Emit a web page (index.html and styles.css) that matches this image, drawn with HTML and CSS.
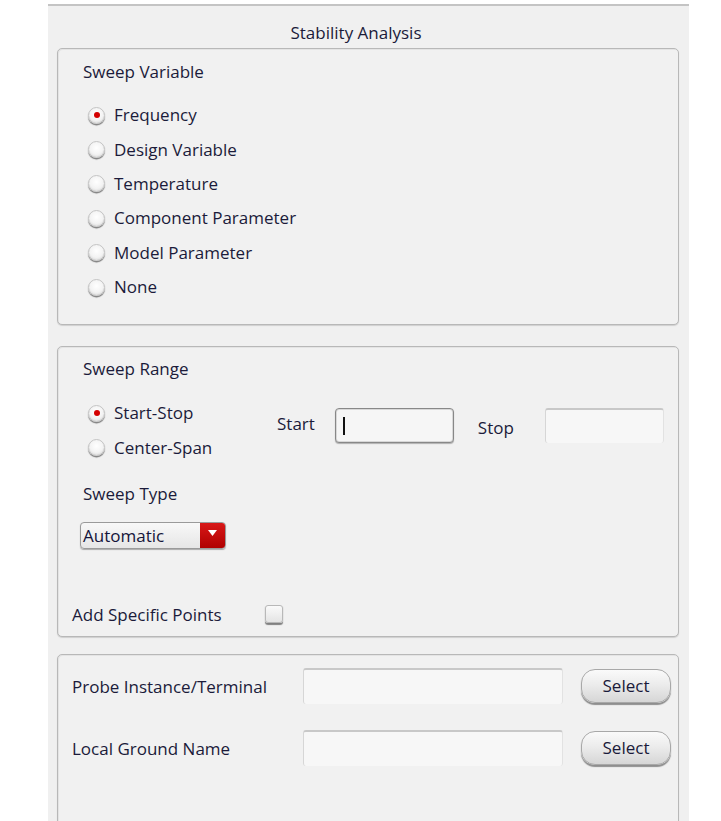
FILE: index.html
```html
<!DOCTYPE html>
<html>
<head>
<meta charset="utf-8">
<link rel="stylesheet" href="styles.css">
</head>
<body>
<div class="panel">
  <div class="title">Stability Analysis</div>

  <div class="group g1">
    <div class="heading">Sweep Variable</div>
    <div class="radios">
      <div class="radio-row"><span class="radio on"></span><span>Frequency</span></div>
      <div class="radio-row"><span class="radio"></span><span>Design Variable</span></div>
      <div class="radio-row"><span class="radio"></span><span>Temperature</span></div>
      <div class="radio-row"><span class="radio"></span><span>Component Parameter</span></div>
      <div class="radio-row"><span class="radio"></span><span>Model Parameter</span></div>
      <div class="radio-row"><span class="radio"></span><span>None</span></div>
    </div>
  </div>

  <div class="group g2">
    <div class="heading">Sweep Range</div>
    <div class="range-row">
      <div class="radios small">
        <div class="radio-row"><span class="radio on"></span><span>Start-Stop</span></div>
        <div class="radio-row"><span class="radio"></span><span>Center-Span</span></div>
      </div>
      <div class="field start">
        <span class="lbl">Start</span>
        <span class="input focus"><span class="caret"></span></span>
      </div>
      <div class="field stop">
        <span class="lbl">Stop</span>
        <span class="input flat"></span>
      </div>
    </div>
    <div class="heading type">Sweep Type</div>
    <div class="dropdown">
      <span class="dd-text">Automatic</span>
      <span class="dd-btn"><svg width="9" height="6" viewBox="0 0 9 6"><path d="M0 0 H9 L4.5 6 Z" fill="#fff"/></svg></span>
    </div>
    <div class="points">
      <span class="pts-lbl">Add Specific Points</span>
      <span class="check"></span>
    </div>
  </div>

  <div class="group g3">
    <div class="probe-row">
      <span class="plbl">Probe Instance/Terminal</span>
      <span class="input flat wide"></span>
      <span class="btn">Select</span>
    </div>
    <div class="probe-row">
      <span class="plbl">Local Ground Name</span>
      <span class="input flat wide"></span>
      <span class="btn">Select</span>
    </div>
  </div>
</div>
</body>
</html>
```

FILE: styles.css
```css
html, body {
  margin: 0;
  padding: 0;
  background: #ffffff;
  height: 821px;
  overflow: hidden;
}
body {
  font-family: "Open Sans", "Noto Sans", sans-serif;
  font-size: 17px;
  color: #1b1b3a;
}
.panel {
  margin-left: 48px;
  margin-top: 4px;
  width: 641px;
  height: 830px;
  background: #f0f0f0;
  border-top: 2px solid #c4c4c4;
  box-sizing: border-box;
  padding: 0 10px 0 9px;
}
.title {
  text-align: center;
  line-height: 22px;
  padding-top: 16px;
  padding-right: 24px;
  height: 26px;
}
.group {
  border: 1px solid #b8b8b8;
  border-radius: 5px;
  box-shadow: inset 1px 1px 0 #e4e4e4, 0 1px 1px #cfcfcf;
  background: #f1f1f1;
  box-sizing: border-box;
}
.g1 {
  height: 277px;
  padding: 12px 0 0 25px;
}
.heading {
  line-height: 22px;
  height: 22px;
}
.radios {
  margin-top: 15px;
  margin-left: 5px;
}
.radio-row {
  display: flex;
  align-items: center;
  height: 34.4px;
  line-height: 22px;
}
.radio {
  width: 17px;
  height: 17px;
  border-radius: 50%;
  box-sizing: border-box;
  background: radial-gradient(circle at 50% 40%, #ffffff 0%, #f3f3f3 55%, #cccccc 100%);
  border: 1px solid #c4c4c4;
  box-shadow: 0 1.5px 1px #808080;
  margin-right: 9px;
  position: relative;
}
.radio.on::after {
  content: "";
  position: absolute;
  left: 4.5px;
  top: 4px;
  width: 6px;
  height: 6px;
  border-radius: 50%;
  background: #d40000;
}
.g2 {
  margin-top: 21px;
  height: 291px;
  padding: 11px 0 0 25px;
  position: relative;
}
.range-row {
  display: flex;
  align-items: flex-start;
  margin-top: 16px;
}
.radios.small {
  margin-top: 0;
  width: 189px;
}
.field {
  display: flex;
  align-items: center;
  margin-top: 12px;
}
.field.start .lbl { margin-top: -4px; margin-right: 20px; }
.field.stop { margin-left: 24px; }
.field.stop .lbl { margin-right: 31px; margin-top: 3px; }
.input {
  display: inline-block;
  width: 119px;
  height: 35px;
  box-sizing: border-box;
  background: #f6f6f6;
  position: relative;
}
.input.focus {
  border: 1px solid #888;
  border-radius: 4px;
  box-shadow: inset 0 0 0 1px #d8d8d8, 0 1px 1px #b0b0b0;
}
.caret {
  position: absolute;
  left: 7px;
  top: 8px;
  width: 2px;
  height: 18px;
  background: #111;
}
.input.flat {
  border-top: 2px solid #c8c8c8;
  border-left: 1px solid #d6d6d6;
  border-right: 1px solid #e2e2e2;
  border-radius: 3px;
  background: #f7f7f7;
}
.heading.type {
  margin-top: 18px;
}
.dropdown {
  margin-top: 17px;
  margin-left: -3px;
  width: 146px;
  height: 27px;
  display: flex;
  border: 1px solid #9a9a9a;
  border-radius: 4px;
  box-sizing: border-box;
  overflow: hidden;
  box-shadow: 0 1px 1px #aaa;
  background: linear-gradient(#f8f8f8, #e6e6e6);
}
.dd-text {
  flex: 1;
  line-height: 25px;
  padding-left: 2px;
  font-size: 17px;
  color: #14143a;
}
.dd-btn {
  width: 25px;
  background: linear-gradient(#d81818, #b00000);
  display: flex;
  align-items: center;
  justify-content: center;
}
.dd-btn svg { margin-top: -4px; }
.points {
  position: absolute;
  left: 14px;
  top: 256px;
  display: flex;
  align-items: center;
}
.pts-lbl {
  width: 193px;
}
.check {
  display: inline-block;
  width: 18px;
  height: 18px;
  box-sizing: border-box;
  border: 1px solid #b8b8b8;
  border-radius: 3px;
  background: linear-gradient(#fafafa, #e4e4e4);
  box-shadow: 0 1.5px 1px #808080;
  margin-top: -1px;
}
.g3 {
  margin-top: 17px;
  height: 200px;
  padding: 13px 0 0 14px;
}
.probe-row {
  display: flex;
  align-items: center;
  height: 36px;
  margin-bottom: 26px;
}
.plbl {
  width: 231px;
}
.input.wide {
  width: 260px;
  height: 36px;
}
.btn {
  margin-left: 18px;
  width: 90px;
  height: 34px;
  box-sizing: border-box;
  border: 1px solid #a8a8a8;
  border-radius: 14px;
  background: linear-gradient(#fafafa 0%, #ececec 45%, #d6d6d6 100%);
  box-shadow: 0 2px 1px #8e8e8e;
  text-align: center;
  line-height: 31px;
  font-size: 17px;
  color: #1a1a3a;
}
```
